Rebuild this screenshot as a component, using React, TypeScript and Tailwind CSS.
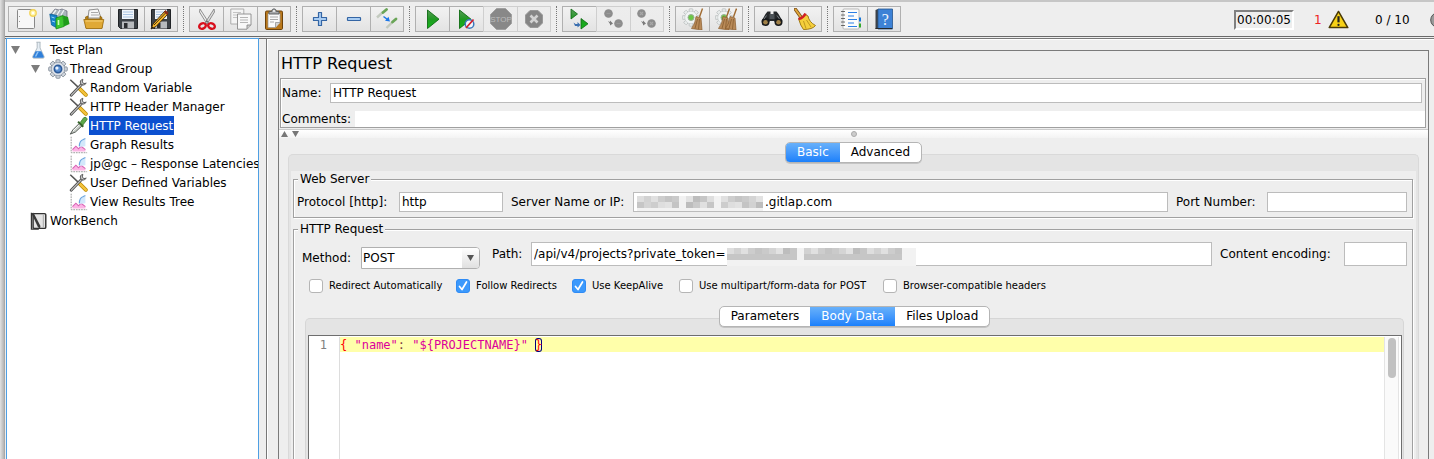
import React, { useState } from "react";

type IconProps = { children: React.ReactNode; size?: string };

function Icon({ children, size = "size-[22px]" }: IconProps) {
  return (
    <svg viewBox="0 0 22 22" className={`${size} shrink-0`} fill="none" aria-hidden="true">
      {children}
    </svg>
  );
}

const NewIcon = () => (
  <Icon>
    <rect x="2.5" y="1.5" width="17" height="19" rx="1" fill="#f7f7f7" stroke="#888" />
    <path d="M4.5 8v1M4.5 13v1" stroke="#999" />
    <circle cx="18" cy="5" r="3.2" fill="#fff6b0" stroke="#f3d45a" strokeWidth="1.4" />
    <circle cx="18" cy="5" r="1.2" fill="#fff" />
  </Icon>
);

const TemplatesIcon = () => (
  <Icon>
    <path d="M2 6l4-5 4 1 3-1 5 2v6l-5 2-10-2z" fill="#aab6bd" stroke="#667" strokeWidth=".7" />
    <path d="M4 6l3-4M8 7l3-5M12 7l3-5" stroke="#eef3f5" strokeWidth="1.300" />
    <path d="M0.800 6L8 7.500v12.500L2.500 17z" fill="#1683c9" stroke="#075a92" strokeWidth=".7" />
    <path d="M7 10l7-2.500 1 11-8 2.500z" fill="#3cc72e" stroke="#13860e" strokeWidth=".7" />
    <path d="M14 7.500l5 1.500 1.500 7-5.500 2.500z" fill="#1f9d1a" />
    <path d="M2.500 9l3 1M3 13l3 1" stroke="#9bd6fb" />
    <path d="M9.500 12v5" stroke="#caffba" strokeWidth="1.600" />
  </Icon>
);

const OpenIcon = () => (
  <Icon>
    <path d="M5 10L6 2l9-1 3 9z" fill="#f7f7f7" stroke="#777" strokeWidth=".8" />
    <path d="M8 4.500h7M8 7h8" stroke="#aaa" />
    <path d="M2.500 9L5 8v3h12V8l2 1.500V20h-16z" fill="#b98214" stroke="#8a5e08" strokeWidth=".7" />
    <path d="M.8 11.500h20L19 20.500H3z" fill="#e0a936" stroke="#9c6b0b" strokeWidth=".8" />
    <path d="M2.500 13h17" stroke="#f6d27a" />
  </Icon>
);

const Floppy = () => (
  <>
    <path d="M1.500 1.500h19v19h-17l-2-2z" fill="#3c4146" stroke="#202326" />
    <rect x="5" y="1.500" width="12" height="9.500" fill="#f1f6fb" />
    <path d="M6 4h10M6 6.500h10M6 9h10" stroke="#a9c4e2" />
    <rect x="5" y="13.500" width="12" height="7" fill="#b7babd" />
    <rect x="7" y="15" width="3.500" height="5" fill="#2b2d30" />
  </>
);

const SaveIcon = () => (
  <Icon>
    <Floppy />
  </Icon>
);

const SaveAsIcon = () => (
  <Icon>
    <Floppy />
    <path d="M1 21l2-5L15 3l3 3L6 18.500z" fill="#f3b52c" stroke="#3a2508" strokeWidth=".9" />
    <path d="M4 17L16 4.500" stroke="#3a2508" strokeWidth=".9" />
    <path d="M14 4l1.500-2 3 2.700L17 7z" fill="#8b2a18" />
    <path d="M1 21l1-2.500 1.500 1.500z" fill="#111" />
  </Icon>
);

const CutIcon = () => (
  <Icon>
    <path d="M4 1l9 14-2 1L3.500 4z" fill="#ededed" stroke="#777" strokeWidth=".8" />
    <path d="M18 1L9 15l2 1 7.500-12z" fill="#ddd" stroke="#777" strokeWidth=".8" />
    <ellipse cx="6.500" cy="18" rx="3.400" ry="2.600" stroke="#d80f1c" strokeWidth="2.400" transform="rotate(-25 6.500 18)" />
    <ellipse cx="15.500" cy="18" rx="3.400" ry="2.600" stroke="#d80f1c" strokeWidth="2.400" transform="rotate(25 15.500 18)" />
    <circle cx="11" cy="13.500" r="1" fill="#666" />
  </Icon>
);

const CopyIcon = () => (
  <Icon>
    <path d="M.8 1h13v15H.8z" fill="#f4f4f4" stroke="#a5a5a5" strokeWidth=".9" />
    <path d="M3 4.500h8M3 7h8M3 9.500h5" stroke="#c4c4c4" />
    <path d="M7.500 6H21v11l-4 4.200H7.500z" fill="#f8f8f8" stroke="#8a8a8a" strokeWidth=".9" />
    <path d="M17 21v-4h4" fill="#ccc" stroke="#8a8a8a" strokeWidth=".9" />
    <path d="M10 9.500h8M10 12h8M10 14.500h8" stroke="#b5b5b5" />
  </Icon>
);

const PasteIcon = () => (
  <Icon>
    <rect x="2.500" y="3" width="17" height="18.500" rx="1.200" fill="#b9781c" stroke="#6d420a" />
    <path d="M5 5.500h12v9l-4.500 5H5z" fill="#fafafa" stroke="#999" strokeWidth=".7" />
    <path d="M12.500 19.500v-5H17" fill="#d5d5d5" stroke="#888" strokeWidth=".7" />
    <path d="M7 9h8M7 11.500h8M7 14h4" stroke="#aaa" />
    <path d="M6 6V3.500h2.500Q9 .8 11 .8t2.500 2.700H16V6z" fill="#a7a9ab" stroke="#55585a" strokeWidth=".9" />
    <circle cx="11" cy="3" r=".9" fill="#fff" />
  </Icon>
);

const PlusIcon = () => (
  <Icon>
    <path d="M9.500 4.500h3v5h5v3h-5v5h-3v-5h-5v-3h5z" fill="#a9cdf3" stroke="#3465a4" strokeWidth="1.200" strokeLinejoin="round" />
  </Icon>
);

const MinusIcon = () => (
  <Icon>
    <rect x="4.500" y="9.500" width="13" height="3" rx=".5" fill="#a9cdf3" stroke="#3465a4" strokeWidth="1.200" />
  </Icon>
);

const ToggleIcon = () => (
  <Icon>
    <path d="M1 9.500l6-5.500" stroke="#c3cabf" strokeWidth="2.400" />
    <path d="M7 4.500l3.500-3" stroke="#6aa557" strokeWidth="2.800" strokeLinecap="round" />
    <path d="M10.500 20l6-6" stroke="#c3cabf" strokeWidth="2.400" />
    <path d="M16.500 14l3.500-3" stroke="#6aa557" strokeWidth="2.800" strokeLinecap="round" />
    <path d="M7.500 8.500l4 3" stroke="#1b76e8" strokeWidth="1.500" />
    <path d="M14 13.500l-5-.7 3.500-4z" fill="#1b76e8" />
  </Icon>
);

const StartIcon = () => (
  <Icon>
    <path d="M5.500 2v18.500L17 11.200z" fill="url(#runGreen)" stroke="#0d6b12" strokeWidth=".9" />
  </Icon>
);

const StartNoPauseIcon = () => (
  <Icon>
    <path d="M3.500 2v18.500L15 11.200z" fill="url(#runGreen)" stroke="#0d6b12" strokeWidth=".9" />
    <circle cx="13.500" cy="16" r="4.300" fill="#f2f6fc" stroke="#3c78bd" strokeWidth="1.500" />
    <path d="M10 20l7.500-8.500" stroke="#d5202b" strokeWidth="1.700" />
  </Icon>
);

const StopIcon = () => (
  <Icon>
    <path d="M6.500.5h9l6 6v9l-6 6h-9l-6-6v-9z" fill="#888888" stroke="#a0a0a0" />
    <text x="11" y="14" textAnchor="middle" fontSize="8" fill="#bcbcbc" fontFamily="Liberation Sans, sans-serif">
      STOP
    </text>
  </Icon>
);

const ShutdownIcon = () => (
  <Icon>
    <path d="M7 2.500h8l4.500 4.500v8L15 19.500H7L2.500 15V7z" fill="#858585" stroke="#999" />
    <path d="M7.500 7.500l7 7M14.500 7.500l-7 7" stroke="#d2d2d2" strokeWidth="2.600" />
  </Icon>
);

const RemoteStartIcon = () => (
  <Icon>
    <path d="M2 1v10l6.500-5zM12 10.500v10.500l7-5.200z" fill="url(#runGreen)" stroke="#0d6b12" strokeWidth=".8" />
    <path d="M4.500 14.500l2 1.500h2v-2l3 3-3 2.500V18H6z" fill="#3b6fb0" />
  </Icon>
);

const RemoteStopIcon = () => (
  <Icon>
    <circle cx="5.500" cy="5.500" r="4.300" fill="#8d8d8d" />
    <circle cx="15.500" cy="15.500" r="4.300" fill="#8d8d8d" />
    <path d="M3.500 5.500h4M13.500 15.500h4" stroke="#9a9a9a" strokeWidth="1.200" />
    <path d="M5 13l2 1V12.500l3 3-3 2V16z" fill="#7b7b7b" />
  </Icon>
);

const RemoteShutdownIcon = () => (
  <Icon>
    <circle cx="5.500" cy="5.500" r="4.300" fill="#8d8d8d" />
    <circle cx="15.500" cy="15.500" r="4.300" fill="#8d8d8d" />
    <path d="M4 4l3 3M7 4L4 7M14 14l3 3M17 14l-3 3" stroke="#a8a8a8" strokeWidth="1.100" />
    <path d="M5 13l2 1V12.500l3 3-3 2V16z" fill="#7b7b7b" />
  </Icon>
);

const Broom = () => (
  <>
    <path d="M20.500.5l-3 8.500" stroke="#a06a30" strokeWidth="1.400" />
    <path d="M14 8.500l5 1.500 1 12-10.500-1.500q4-5 4.500-12z" fill="#b98a58" stroke="#8a5c2c" strokeWidth=".7" />
    <path d="M15.500 11l-2.500 9.500M17.500 11l-1 10" stroke="#80562a" strokeWidth=".7" />
  </>
);

const toothAngles = [0, 45, 90, 135, 180, 225, 270, 315];

const Gear = () => (
  <>
    {toothAngles.map((a) => (
      <rect key={a} x="7.200" y=".8" width="3.600" height="4" rx=".6" fill="#e9ecec" stroke="#b9bebe" strokeWidth=".8" transform={`rotate(${a} 9 9.500)`} />
    ))}
    <circle cx="9" cy="9.500" r="6.300" fill="#f1f4f4" stroke="#c4c8c8" strokeWidth=".7" />
    <circle cx="9" cy="9.500" r="3" fill="#6bc746" stroke="#9aaf96" />
  </>
);

const ClearIcon = () => (
  <Icon>
    <Gear />
    <Broom />
  </Icon>
);

const ClearAllIcon = () => (
  <Icon>
    <Gear />
    <g transform="translate(-6 0)">
      <Broom />
    </g>
    <g transform="translate(1 0)">
      <Broom />
    </g>
  </Icon>
);

const SearchIcon = () => (
  <Icon>
    <path d="M4.500 6l2-2.500h3V6h3V3.500h3l2 2.500 4 7-4.500 4.500-4-4.500h-4l-4 4.500L.5 13z" fill="#25282b" />
    <rect x="8.500" y="6" width="5" height="5" fill="#4c5257" />
    <circle cx="4.500" cy="14" r="4" fill="#17191b" />
    <circle cx="17.500" cy="14" r="4" fill="#17191b" />
    <circle cx="4.500" cy="14.300" r="2.300" fill="#a08047" />
    <circle cx="17.500" cy="14.300" r="2.300" fill="#a08047" />
    <path d="M5.500 7.500L3 11M16 7.500l2.500 3.500" stroke="#777e84" />
  </Icon>
);

const ResetSearchIcon = () => (
  <Icon>
    <path d="M1.500 1.500l5 7" stroke="#7a4b14" strokeWidth="3.400" strokeLinecap="round" />
    <path d="M1.500 1.500l5 7" stroke="#e0a73b" strokeWidth="2" strokeLinecap="round" />
    <path d="M4.500 10.500q4-1 6-4.500l3.500 2q1 6 7.500 9.500-3 4-12 4Q6.500 18 4.500 10.500z" fill="#f5cf3b" stroke="#96710b" strokeWidth=".9" />
    <path d="M4.500 11q5-1 7-5.500" stroke="#d21e25" strokeWidth="2.600" />
    <path d="M9.500 13l2.500 7.500M12.500 12l4.500 7" stroke="#b08a18" strokeWidth=".8" />
  </Icon>
);

const FunctionHelperIcon = () => (
  <Icon>
    <rect x="3" y="1" width="16" height="20" rx="1" fill="#fcfcfc" stroke="#aaa" strokeWidth=".8" />
    <path d="M1.500 3.500h3M1.500 7h3M1.500 10.500h3M1.500 14h3M1.500 17.500h3" stroke="#666" strokeWidth="1.200" strokeLinecap="round" />
    <path d="M8 4.500h9M8 8h6M8 11.500h9M8 15h6M8 18.500h9" stroke="#2b7fe5" strokeWidth="1.200" />
    <path d="M19 9.500h2v4h-2z" fill="#1677d9" />
    <path d="M19 15.500h2v4h-2z" fill="#34a82c" />
  </Icon>
);

const HelpIcon = () => (
  <Icon>
    <path d="M2.500 2L5 1v20H2.500z" fill="#3c4148" />
    <path d="M5 1h14.500v20H5z" fill="#3d82d6" stroke="#26558e" strokeWidth=".8" />
    <path d="M2.500 20.500H19" stroke="#26282b" />
    <text x="12.300" y="16.500" textAnchor="middle" fontSize="16" fill="#eef5ff" fontFamily="Liberation Serif, serif">
      ?
    </text>
  </Icon>
);

type Tool = { label: string; icon: React.ReactNode; disabled?: boolean };

const toolGroups: Tool[][] = [
  [
    { label: "New", icon: <NewIcon /> },
    { label: "Templates", icon: <TemplatesIcon /> },
    { label: "Open", icon: <OpenIcon /> },
    { label: "Save", icon: <SaveIcon /> },
    { label: "Save as", icon: <SaveAsIcon /> },
  ],
  [
    { label: "Cut", icon: <CutIcon /> },
    { label: "Copy", icon: <CopyIcon /> },
    { label: "Paste", icon: <PasteIcon /> },
  ],
  [
    { label: "Expand all", icon: <PlusIcon /> },
    { label: "Collapse all", icon: <MinusIcon /> },
    { label: "Toggle", icon: <ToggleIcon /> },
  ],
  [
    { label: "Start", icon: <StartIcon /> },
    { label: "Start no pauses", icon: <StartNoPauseIcon /> },
    { label: "Stop", icon: <StopIcon />, disabled: true },
    { label: "Shutdown", icon: <ShutdownIcon />, disabled: true },
  ],
  [
    { label: "Remote start all", icon: <RemoteStartIcon /> },
    { label: "Remote stop all", icon: <RemoteStopIcon />, disabled: true },
    { label: "Remote shutdown all", icon: <RemoteShutdownIcon />, disabled: true },
  ],
  [
    { label: "Clear", icon: <ClearIcon /> },
    { label: "Clear all", icon: <ClearAllIcon /> },
  ],
  [
    { label: "Search", icon: <SearchIcon /> },
    { label: "Reset search", icon: <ResetSearchIcon /> },
  ],
  [
    { label: "Function helper", icon: <FunctionHelperIcon /> },
    { label: "Help", icon: <HelpIcon /> },
  ],
];

function Toolbar() {
  return (
    <header className="flex h-[38px] shrink-0 items-start border-t-2 border-[#c6c6c6] bg-[#eeeeee] pt-1 pl-[3px]">
      {toolGroups.map((group, g) => (
        <React.Fragment key={g}>
          {g > 0 && <div className="mx-[5px] h-[26px] w-px shrink-0 border-l border-dotted border-[#777777]" />}
          <div className="flex shrink-0">
            {group.map((tool) => (
              <button
                key={tool.label}
                type="button"
                aria-label={tool.label}
                disabled={tool.disabled}
                className="flex h-[26px] w-[34px] items-center justify-center border border-r-0 border-[#b0b0b0] bg-linear-to-b from-[#f2f2f2] to-[#e3e3e3] last:border-r disabled:border-[#cfcfcf] disabled:from-[#ededed] disabled:to-[#ebebeb]"
              >
                {tool.icon}
              </button>
            ))}
          </div>
        </React.Fragment>
      ))}
      <div className="ml-auto flex h-[27px] shrink-0 items-center">
        <output className="flex h-5 w-[60px] items-center justify-center border-2 border-t-[#808080] border-r-white border-b-white border-l-[#808080]">
          00:00:05
        </output>
        <span className="ml-5 w-3 text-[#ee2222]">1</span>
        <svg viewBox="0 0 22 20" className="ml-[2px] h-[19px] w-[21px]" role="img" aria-label="Warnings">
          <path d="M11 1.500L20.800 18.500H1.200z" fill="#f7d117" stroke="#4a3a05" strokeWidth="1.600" strokeLinejoin="round" />
          <path d="M11 6.500v6.500" stroke="#222" strokeWidth="2.300" />
          <circle cx="11" cy="15.700" r="1.200" fill="#222" />
        </svg>
        <span className="ml-[26px] w-[55px]">0 / 10</span>
        <span className="w-1 overflow-hidden">
          <svg viewBox="0 0 16 16" className="size-4" aria-hidden="true">
            <circle cx="8" cy="8" r="7.300" fill="#9a9a9a" stroke="#555" />
          </svg>
        </span>
      </div>
    </header>
  );
}

const FlaskIcon = () => (
  <Icon size="size-[18px]">
    <path d="M9 1.500h5M10 1.500v7L4.500 19q-.5 2 1.500 2h11q2 0 1.500-2L13.500 8.500v-7" fill="#e6eef5" stroke="#a8b3bb" strokeWidth="1.100" />
    <path d="M8 12.500h7l3 6.500q.3 1.500-1 1.500H6q-1.500 0-1-1.500z" fill="#2f7fd9" />
    <path d="M10 13h2l-3 6H7z" fill="#8fc3f5" />
  </Icon>
);

const ThreadGroupIcon = () => (
  <Icon size="size-5">
    {toothAngles.map((a) => (
      <rect key={a} x="8.700" y=".8" width="4.600" height="5" rx="1" fill="#cfd5dc" stroke="#79838f" strokeWidth=".9" transform={`rotate(${a} 11 11)`} />
    ))}
    <circle cx="11" cy="11" r="7.400" fill="#dce1e7" stroke="#8a94a1" strokeWidth=".8" />
    <circle cx="11" cy="11" r="4" fill="#5d93d6" stroke="#2c5a98" strokeWidth="1.800" />
    <circle cx="9.800" cy="10" r="1.800" fill="#e8f2ff" />
  </Icon>
);

const ToolsIcon = () => (
  <Icon size="size-[19px]">
    <path d="M1.500 2l10 9.500" stroke="#555" strokeWidth="1.800" />
    <path d="M12.500 12.500l7 7" stroke="#b98900" strokeWidth="4.400" strokeLinecap="round" />
    <path d="M12.500 12.500l7 7" stroke="#f4c33c" strokeWidth="2.800" strokeLinecap="round" />
    <path d="M2.500 20L15 7" stroke="#4e4e4e" strokeWidth="3.200" strokeLinecap="round" />
    <path d="M2.700 19.800L15 7" stroke="#c3c3c3" strokeWidth="1.300" strokeLinecap="round" />
    <path d="M16 1.500q-4 1-2.500 5 3 3.500 6.500-.5l-3 .5-1.500-2z" fill="#c8c8c8" stroke="#555" strokeWidth="1.100" />
  </Icon>
);

const DropperIcon = () => (
  <Icon size="size-[19px]">
    <path d="M1.500 21l3-5 8-8 3 3-8 7.500z" fill="#c9cfc9" stroke="#505550" strokeWidth="1.100" />
    <path d="M4.500 17.500l7-7" stroke="#fff" />
    <path d="M10.500 6.500l6 6" stroke="#35632b" strokeWidth="2.400" />
    <path d="M13 7.500l4-5.500q3.500-1.500 4 2L16 10.500z" fill="#5ca94a" stroke="#35732a" strokeWidth=".9" />
  </Icon>
);

const ChartIcon = () => (
  <Icon size="size-[19px]">
    <path d="M2.500 2v18.500H21" stroke="#999" strokeWidth="1.100" strokeDasharray="2 1" />
    <path d="M4 19v-2l4-4 3 3 3-3 5 4v2z" fill="#fbb4e4" />
    <path d="M4 17l4-4 3 3 3-3 5 4" stroke="#d862b4" strokeWidth="1.300" />
    <path d="M12 14q-1-6 4-8l3-1.500V13z" fill="#d3e8fb" />
    <path d="M12 13q0-6 4-7.500L19 4" stroke="#6ba5df" strokeWidth="1.400" />
  </Icon>
);

const WorkBenchIcon = () => (
  <Icon size="size-[18px]">
    <rect x="5" y="2" width="15.500" height="18" rx="1.500" fill="#e4e4e4" stroke="#333" strokeWidth="1.800" />
    <path d="M17.500 3v16" stroke="#aaa" strokeWidth="1.300" />
    <path d="M3 1.500L5.500 1 14 17l-.5 3-2.500-1.500z" fill="#383838" />
    <path d="M3 1v20h9" stroke="#333" strokeWidth="1.600" />
  </Icon>
);

type Node = { label: string; icon: React.ReactNode; depth: number; open?: boolean; selected?: boolean };

const nodes: Node[] = [
  { label: "Test Plan", icon: <FlaskIcon />, depth: 1, open: true },
  { label: "Thread Group", icon: <ThreadGroupIcon />, depth: 2, open: true },
  { label: "Random Variable", icon: <ToolsIcon />, depth: 3 },
  { label: "HTTP Header Manager", icon: <ToolsIcon />, depth: 3 },
  { label: "HTTP Request", icon: <DropperIcon />, depth: 3, selected: true },
  { label: "Graph Results", icon: <ChartIcon />, depth: 3 },
  { label: "jp@gc – Response Latencies", icon: <ChartIcon />, depth: 3 },
  { label: "User Defined Variables", icon: <ToolsIcon />, depth: 3 },
  { label: "View Results Tree", icon: <ChartIcon />, depth: 3 },
  { label: "WorkBench", icon: <WorkBenchIcon />, depth: 1 },
];

const indent: Record<number, string> = { 1: "pl-1", 2: "pl-6", 3: "pl-11" };

function Tree() {
  return (
    <nav className="w-[253px] shrink-0 overflow-hidden border border-b-0 border-[#4f9fe3] bg-white pt-px">
      <ul role="tree">
        {nodes.map((n) => (
          <li
            key={n.label}
            role="treeitem"
            aria-selected={!!n.selected}
            className={`flex h-[19px] items-center whitespace-nowrap ${indent[n.depth]}`}
          >
            <span className="flex w-4 shrink-0 items-center">
              {n.open && (
                <svg viewBox="0 0 9 8" className="h-2 w-[9px]" aria-hidden="true">
                  <path d="M0 0h9L4.500 8z" fill="#7d7d7d" />
                </svg>
              )}
            </span>
            <span className="flex w-[22px] shrink-0 items-center justify-center">{n.icon}</span>
            <span className={n.selected ? "h-[19px] bg-[#0c50d0] px-px leading-5 text-white" : "px-px"}>{n.label}</span>
          </li>
        ))}
      </ul>
    </nav>
  );
}

function Segments({ label, items, initial }: { label: string; items: string[]; initial: string }) {
  const [active, setActive] = useState(initial);
  return (
    <div className="relative z-10 flex justify-center">
      <div role="tablist" aria-label={label} className="flex h-[21px] overflow-hidden rounded-[5px] border border-[#b5b5b5] bg-white shadow-[0_1px_0_#c4c4c4]">
        {items.map((item) => (
          <button
            key={item}
            type="button"
            role="tab"
            aria-selected={item === active}
            onClick={() => setActive(item)}
            className="-my-px px-[11px] leading-[21px] aria-selected:bg-linear-to-b aria-selected:from-[#6bb3fa] aria-selected:to-[#127dfb] aria-selected:text-white"
          >
            {item}
          </button>
        ))}
      </div>
    </div>
  );
}

const mosaicShades = ["#dedede", "#cdcdcd", "#d4d4d4", "#c6c6c6", "#e0e0e0", "#cacaca", "#bdbdbd", "#d2d2d2", "#c4c4c4", "#e2e2e2"];

function Mosaic({ cols, rows, seed, gaps }: { cols: number; rows: number; seed: number; gaps: number[] }) {
  const cells: React.ReactNode[] = [];
  for (let y = 0; y < rows; y++) {
    for (let x = 0; x < cols; x++) {
      const faint = y === rows - 1 || gaps.includes(x);
      const shade = faint ? "#f2f2f2" : mosaicShades[(x * 7 + y * 3 + x * y * seed) % 10];
      cells.push(<rect key={`${x}-${y}`} x={x * 7} y={y * 6} width="7" height="6" fill={shade} />);
    }
  }
  return (
    <svg width={cols * 7} height={rows * 6} shapeRendering="crispEdges" aria-hidden="true">
      {cells}
    </svg>
  );
}

const fieldBox = "border border-[#bcbcbc] bg-white px-[2px] outline-none focus:border-[#4f9fe3]";
const groupBox = "min-w-0 border border-[#a0a0a0] shadow-[1px_1px_0_#fff,inset_1px_1px_0_#fff]";

function Check({ label, checked, width }: { label: string; checked?: boolean; width: string }) {
  return (
    <label className={`flex shrink-0 items-center gap-1.5 text-[10px] ${width}`}>
      <span className="relative flex">
        <input
          type="checkbox"
          defaultChecked={checked}
          className="peer size-3.5 appearance-none rounded-[3px] border border-[#b5b5b5] bg-white checked:border-[#2f8bf5] checked:bg-[#3b99fc]"
        />
        <svg viewBox="0 0 14 14" className="pointer-events-none absolute inset-0 hidden size-3.5 peer-checked:block" fill="none" aria-hidden="true">
          <path d="M3.500 7.500l2.500 3 4.500-7.500" stroke="#fff" strokeWidth="1.700" strokeLinecap="round" strokeLinejoin="round" />
        </svg>
      </span>
      {label}
    </label>
  );
}

function WebServer() {
  return (
    <fieldset className={`${groupBox} pr-[5px] pb-[5px] pl-[3px]`}>
      <legend className="ml-px h-4 bg-[#eeeeee] px-0.5 leading-4">Web Server</legend>
      <div className="flex h-[25px] items-center pt-[5px]">
        <label htmlFor="protocol" className="w-[102px] shrink-0">Protocol [http]:</label>
        <input id="protocol" defaultValue="http" className={`h-5 w-[104px] shrink-0 ${fieldBox}`} />
        <label htmlFor="server" className="ml-2 w-[122px] shrink-0">Server Name or IP:</label>
        <div className="relative min-w-0 flex-1">
          <input id="server" defaultValue=".gitlap.com" className={`block h-5 w-full ${fieldBox} pl-[131px]`} />
          <span className="absolute top-[4px] left-[4px] flex h-[15px] overflow-hidden">
            <Mosaic cols={18} rows={3} seed={2} gaps={[6, 11]} />
          </span>
        </div>
        <label htmlFor="port" className="ml-2 w-[91px] shrink-0">Port Number:</label>
        <input id="port" className={`h-5 w-[140px] shrink-0 ${fieldBox}`} />
      </div>
    </fieldset>
  );
}

function Editor() {
  return (
    <div className="flex min-h-0 flex-1 border border-b-0 border-[#6e6e6e] bg-white pt-px">
      <div className="w-[31px] shrink-0 border-r border-[#dddddd] pr-3 text-right font-['DejaVu_Sans_Mono',monospace] text-xs leading-4 text-[#808080]">1</div>
      <div
        role="textbox"
        aria-label="Body data"
        aria-multiline="true"
        contentEditable
        suppressContentEditableWarning
        spellCheck={false}
        className="min-w-0 flex-1 font-['DejaVu_Sans_Mono',monospace] text-xs leading-4 whitespace-pre text-[#dc009c] outline-none"
      >
        <div className="h-[15px] bg-[#ffffaa]">
          <span className="text-[#ff0000]">{"{"}</span> "name"<span className="text-[#804040]">:</span>{" \"${PROJECTNAME}\" "}
          <span className="rounded-[3px] text-[#ff0000] ring-1 ring-[#000080] ring-inset">{"}"}</span>
        </div>
      </div>
      <div className="w-[15px] shrink-0 border-x border-[#e4e4e4] bg-[#fafafa] pt-px pl-[3px]">
        <div className="h-10 w-2 rounded-full bg-[#c1c1c1]" />
      </div>
      <div className="w-0.5 shrink-0" />
    </div>
  );
}

function HttpRequest() {
  return (
    <fieldset className={`${groupBox} mt-[3px] flex min-h-0 flex-1 flex-col border-b-0`}>
      <legend className="ml-1 h-4 bg-[#eeeeee] px-0.5 leading-4">HTTP Request</legend>
      <div className="flex h-8 shrink-0 items-start pt-[5px] pr-[5px] pl-2">
        <label htmlFor="method" className="w-[59px] shrink-0 pt-[5px] leading-[22px]">Method:</label>
        <div className="relative mt-[5px] w-[119px] shrink-0">
          <select id="method" defaultValue="POST" className="block h-[22px] w-full appearance-none rounded-r-[4px] border border-[#b0b0b0] bg-white px-px">
            <option>GET</option>
            <option>POST</option>
            <option>PUT</option>
            <option>DELETE</option>
          </select>
          <span className="pointer-events-none absolute inset-y-px right-px flex w-[17px] items-center justify-center rounded-r-[3px] bg-linear-to-b from-white to-[#e0e0e0]">
            <svg viewBox="0 0 7 6" className="h-1.5 w-[7px]" aria-hidden="true">
              <path d="M0 0h7L3.500 6z" fill="#555" />
            </svg>
          </span>
        </div>
        <label htmlFor="path" className="ml-3 w-[39px] shrink-0 leading-6">Path:</label>
        <div className="relative min-w-0 flex-1">
          <input id="path" defaultValue="/api/v4/projects?private_token=" className={`block h-6 w-full ${fieldBox}`} />
          <span className="absolute top-[6px] left-[196px]">
            <Mosaic cols={27} rows={3} seed={3} gaps={[10, 25, 26]} />
          </span>
        </div>
        <label htmlFor="encoding" className="ml-2 w-[124px] shrink-0 leading-6">Content encoding:</label>
        <input id="encoding" className={`h-6 w-[63px] shrink-0 ${fieldBox}`} />
      </div>
      <div className="mt-2 flex h-[18px] shrink-0 items-center pl-[15px]">
        <Check label="Redirect Automatically" width="w-[147px]" />
        <Check label="Follow Redirects" checked width="w-[116px]" />
        <Check label="Use KeepAlive" checked width="w-[107px]" />
        <Check label="Use multipart/form-data for POST" width="w-[204px]" />
        <Check label="Browser-compatible headers" width="w-[180px]" />
      </div>
      <div className="mt-[11px] flex min-h-0 flex-1 flex-col pr-2 pl-[11px]">
        <Segments label="Request content" items={["Parameters", "Body Data", "Files Upload"]} initial="Body Data" />
        <div className="-mt-[9px] flex min-h-0 flex-1 flex-col rounded-t-[5px] border border-b-0 border-[#d6d6d6] bg-[#e4e4e4] pr-px pl-0.5 pt-4">
          <Editor />
        </div>
      </div>
    </fieldset>
  );
}

export default function App() {
  return (
    <div className="flex h-screen overflow-hidden bg-[#eeeeee] font-['Lucida_Grande','DejaVu_Sans',sans-serif] text-xs leading-4 text-black">
      <svg width="0" height="0" className="absolute" aria-hidden="true">
        <defs>
          <linearGradient id="runGreen" x1="0" y1="0" x2="0" y2="1">
            <stop offset="0" stopColor="#5a9a5a" />
            <stop offset=".5" stopColor="#1f9a22" />
            <stop offset="1" stopColor="#12b818" />
          </linearGradient>
        </defs>
      </svg>
      <div className="w-1 shrink-0 bg-linear-to-r from-[#e2e2e2] to-[#b4b4b4]" />
      <div className="flex min-w-0 flex-1 flex-col border-l border-[#a8a8a8]">
        <Toolbar />
        <div className="-mt-0.5 h-[3px] shrink-0 border-y border-[#6a6a6a]" />
        <div className="-mt-px flex min-h-0 flex-1 pl-px">
          <Tree />
          <main className="ml-[7px] flex min-w-0 flex-1 flex-col border-t border-l border-[#777777] pt-[11px] pr-[5px] pl-[11px] shadow-[inset_1px_1px_0_#fff]">
            <div className="flex min-h-0 flex-1 flex-col border border-b-0 border-[#7a7a7a]">
              <h1 className="h-[27px] shrink-0 pl-0.5 text-base leading-[26px]">HTTP Request</h1>
              <div className="ml-px mr-0.5 flex h-[50px] shrink-0 flex-col justify-between border border-[#a0a0a0] pl-px shadow-[inset_1px_1px_0_#fff]">
                <div className="flex items-center pt-1 pr-[3px]">
                  <label htmlFor="name" className="w-12 shrink-0">Name:</label>
                  <input id="name" defaultValue="HTTP Request" className={`h-5 min-w-0 flex-1 ${fieldBox}`} />
                </div>
                <div className="flex items-center">
                  <label htmlFor="comments" className="w-[73px] shrink-0">Comments:</label>
                  <input id="comments" className="h-4 min-w-0 flex-1 bg-white px-0.5 outline-none" />
                </div>
              </div>
              <div className="mt-px flex h-[9px] shrink-0 items-center justify-between border-t border-[#cccccc] bg-linear-to-b from-white to-[#f3f3f3] px-0.5">
                <svg viewBox="0 0 18 6" className="h-1.5 w-[18px]" aria-hidden="true">
                  <path d="M0 6h7L3.500 0zM11 0h7l-3.500 6z" fill="#777" />
                </svg>
                <span className="size-1.5 rounded-full border border-[#aaaaaa] bg-[#cccccc]" />
                <span className="w-[18px]" />
              </div>
              <div className="mt-1 flex min-h-0 flex-1 flex-col pr-[9px] pl-[9px]">
                <Segments label="Detail level" items={["Basic", "Advanced"]} initial="Basic" />
                <div className="-mt-[9px] flex min-h-0 flex-1 flex-col rounded-t-[5px] border border-b-0 border-[#d9d9d9] bg-[#e4e4e4] px-0.5 pt-4">
                  <div className="flex min-h-0 flex-1 flex-col bg-[#eeeeee] pr-[3px] pl-0.5">
                    <WebServer />
                    <HttpRequest />
                  </div>
                </div>
              </div>
            </div>
          </main>
        </div>
      </div>
    </div>
  );
}
